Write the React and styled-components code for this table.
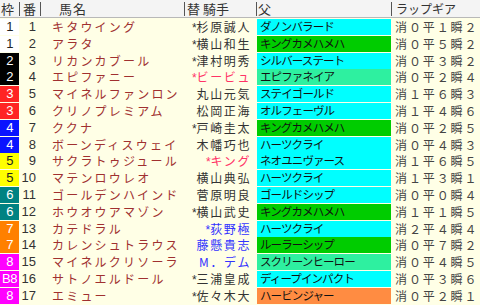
import React from "react";
import styled, { createGlobalStyle } from "styled-components";

const Global = createGlobalStyle`
  html, body { margin: 0; padding: 0; background: #ffffe6; }
  body { font-family: "Noto Sans CJK JP", "Noto Sans", sans-serif; }
`;

const FRAME = {
  1: { bg: "#ffffff", fg: "#222" },
  2: { bg: "#000000", fg: "#fff" },
  3: { bg: "#ff2424", fg: "#fff" },
  4: { bg: "#0a14ff", fg: "#fff" },
  5: { bg: "#ffff00", fg: "#222" },
  6: { bg: "#008282", fg: "#fff" },
  7: { bg: "#ff8000", fg: "#fff" },
  8: { bg: "#ff00ff", fg: "#fff" },
};

const SIRE = {
  cyan: "#00ffff",
  green: "#00cc00",
  sea: "#2ef0a0",
  orange: "#ff8c42",
};

const JOCKEY_COLOR = {
  k: "#333333",
  r: "#ff3366",
  b: "#3333ff",
};

const rows = [
  [1, "1", "キタウイング", "*杉原誠人", "k", "ダノンバラード", "cyan", "消0平1瞬2"],
  [1, "2", "アラタ", "*横山和生", "k", "キングカメハメハ", "green", "消0平5瞬2"],
  [2, "3", "リカンカブール", "*津村明秀", "k", "シルバーステート", "cyan", "消0平3瞬2"],
  [2, "4", "エピファニー", "*ビービュ", "r", "エピファネイア", "sea", "消0平2瞬4"],
  [3, "5", "マイネルファンロン", "丸山元気", "k", "ステイゴールド", "cyan", "消1平6瞬3"],
  [3, "6", "クリノプレミアム", "松岡正海", "k", "オルフェーヴル", "cyan", "消1平4瞬6"],
  [4, "7", "ククナ", "*戸崎圭太", "k", "キングカメハメハ", "green", "消0平2瞬5"],
  [4, "8", "ボーンディスウェイ", "木幡巧也", "k", "ハーツクライ", "cyan", "消0平4瞬3"],
  [5, "9", "サクラトゥジュール", "*キング", "r", "ネオユニヴァース", "cyan", "消1平6瞬5"],
  [5, "10", "マテンロウレオ", "横山典弘", "k", "ハーツクライ", "cyan", "消1平3瞬1"],
  [6, "11", "ゴールデンハインド", "菅原明良", "k", "ゴールドシップ", "cyan", "消0平0瞬4"],
  [6, "12", "ホウオウアマゾン", "*横山武史", "k", "キングカメハメハ", "green", "消1平1瞬5"],
  [7, "13", "カテドラル", "*荻野極", "b", "ハーツクライ", "cyan", "消2平4瞬4"],
  [7, "14", "カレンシュトラウス", "藤懸貴志", "b", "ルーラーシップ", "green", "消0平7瞬2"],
  [8, "15", "マイネルクリソーラ", "M．デム", "b", "スクリーンヒーロー", "sea", "消0平4瞬5"],
  [8, "16", "サトノエルドール", "*三浦皇成", "k", "ディープインパクト", "cyan", "消0平3瞬6"],
  [8, "17", "エミュー", "*佐々木大", "k", "ハービンジャー", "orange", "消0平2瞬1"],
];

const COLS = "20px 21px 144px 72px 135px 88px";

const Table = styled.div`
  width: 480px;
  height: 305px;
  overflow: hidden;
  background: #ffffe6;
  display: grid;
  grid-template-rows: 18px repeat(17, 16.8px);
`;

const HeaderRow = styled.div`
  display: grid;
  grid-template-columns: ${COLS};
  background: #f4f4f4;
  border-bottom: 1px solid #b8b8b8;
  box-sizing: border-box;
`;

const HeadCell = styled.div`
  position: relative;
  font-size: 13px;
  line-height: 17px;
  color: #333;
  padding-left: ${(p) => p.$pad || 1}px;
  letter-spacing: ${(p) => p.$ls || 0}px;
  white-space: nowrap;
  &::after {
    content: "";
    display: ${(p) => (p.$sep ? "block" : "none")};
    position: absolute;
    right: 0;
    top: 2px;
    bottom: 1px;
    width: 1px;
    background: #555;
  }
`;

const SmallHead = styled(HeadCell)`
  font-size: 12px;
`;

const Row = styled.div`
  display: grid;
  grid-template-columns: ${COLS};
  min-height: 0;
`;

const FrameCell = styled.div`
  background: ${(p) => FRAME[p.$w].bg};
  color: ${(p) => FRAME[p.$w].fg};
  margin: 1px 1px 0 0;
  font-family: "Liberation Sans", "Noto Sans", sans-serif;
  font-size: 13px;
  line-height: 15px;
  text-align: center;
  letter-spacing: -0.5px;
`;

const NumCell = styled.div`
  font-family: "Liberation Sans", "Noto Sans", sans-serif;
  font-size: 13px;
  line-height: 17px;
  color: #333;
  text-align: right;
  padding-right: 5px;
`;

const NameCell = styled.div`
  font-size: 12px;
  line-height: 17px;
  color: #a03030;
  padding-left: 11px;
  letter-spacing: 2.2px;
  white-space: nowrap;
  overflow: hidden;
`;

const JockeyCell = styled.div`
  font-size: 12px;
  line-height: 17px;
  color: ${(p) => JOCKEY_COLOR[p.$c]};
  text-align: right;
  padding-right: 6px;
  letter-spacing: 1.6px;
  white-space: nowrap;
  overflow: hidden;
`;

const Mark = styled.span`
  font-family: "Liberation Sans", sans-serif;
  font-size: 12px;
  letter-spacing: 0;
`;

const SireCell = styled.div`
  background: ${(p) => SIRE[p.$c]};
  margin: 1px 1px 0 0;
  font-size: 11.5px;
  line-height: 15px;
  color: #111;
  padding-left: 3px;
  letter-spacing: -0.9px;
  white-space: nowrap;
  overflow: hidden;
`;

const LapCell = styled.div`
  font-size: 12px;
  line-height: 17px;
  color: #444;
  padding-left: 3px;
  letter-spacing: 1.9px;
  white-space: nowrap;
`;

const toFull = (s) => s.replace(/[0-9]/g, (d) => String.fromCharCode(d.charCodeAt(0) + 0xfee0));

export default function App() {
  return (
    <>
      <Global />
      <Table>
        <HeaderRow>
          <HeadCell $sep>枠</HeadCell>
          <HeadCell $sep $pad={3}>番</HeadCell>
          <HeadCell $sep $pad={18} $ls={1}>馬名</HeadCell>
          <HeadCell $sep $pad={2}>替 騎手</HeadCell>
          <HeadCell $sep $pad={1}>父</HeadCell>
          <SmallHead $pad={4}>ラップギア</SmallHead>
        </HeaderRow>
        {rows.map(([w, num, name, jockey, jc, sire, sc, lap]) => {
          const hasMark = jockey.startsWith("*");
          const jname = hasMark ? jockey.slice(1) : jockey;
          return (
            <Row key={num}>
              <FrameCell $w={w}>{num === "16" ? "B8" : w}</FrameCell>
              <NumCell>{num}</NumCell>
              <NameCell>{name}</NameCell>
              <JockeyCell $c={jc}>
                {hasMark && <Mark>*</Mark>}
                {jname}
              </JockeyCell>
              <SireCell $c={sc}>{sire}</SireCell>
              <LapCell>{toFull(lap)}</LapCell>
            </Row>
          );
        })}
      </Table>
    </>
  );
}
